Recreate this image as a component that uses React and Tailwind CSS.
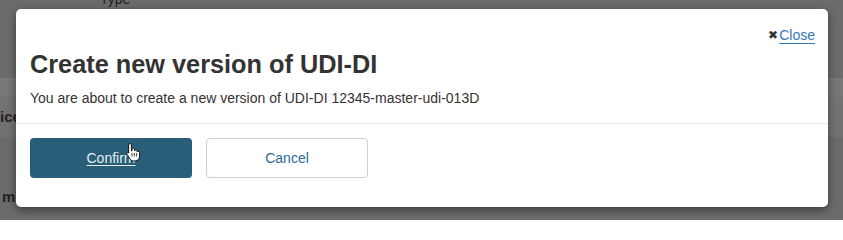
import React from "react";

const HandCursor = () => (
  <svg width="16" height="20" viewBox="0 0 16 20" className="absolute left-[95px] top-[4px]">
    <path
      d="M5 1.5c.8 0 1.4.6 1.4 1.4V9l.6-.1V7.6c0-.8.6-1.3 1.3-1.3s1.3.5 1.3 1.3v1.2c.2-.6.7-1 1.3-1 .7 0 1.3.6 1.3 1.3v.9c.2-.5.7-.8 1.2-.8.7 0 1.2.6 1.2 1.3v3.7c0 2.6-1.8 4.7-4.3 4.7H8.4c-1.5 0-2.6-.7-3.4-1.900L2 12.3c-.4-.6-.2-1.3.4-1.6.5-.3 1.1-.2 1.5.3L3.6 10V2.9c0-.8.6-1.4 1.4-1.4z"
      fill="#fff"
      stroke="#111"
      strokeWidth="1"
      strokeLinejoin="round"
    />
    <path d="M7 11v3.5M9.3 11v3.5M11.6 11v3.5" stroke="#111" strokeWidth="0.8" />
  </svg>
);

export default function App() {
  return (
    <div className="relative w-[843px] h-[220px] overflow-hidden bg-[#6b6b6b] font-['Liberation_Sans',Arial,sans-serif]">
      {/* dimmed page behind the dialog */}
      <div className="flex flex-col">
        <div className="h-[78px] pl-[100px]">
          <span className="block -mt-[11px] text-[14px] text-[#222]">Type</span>
        </div>
        <div className="h-[19px] bg-[#777777]" />
        <div className="h-[40px] bg-[#727272] flex items-center">
          <span className="text-[15px] font-bold text-[#222]">ice</span>
        </div>
        <div className="h-[83px] flex items-end pb-[12px]">
          <span className="pl-[2px] text-[15px] font-bold text-[#222]">m</span>
        </div>
      </div>

      {/* dialog */}
      <div className="absolute left-[16px] top-[9px] w-[812px] h-[198px] bg-white rounded-[5px] shadow-[0_3px_8px_rgba(0,0,0,0.45)] flex flex-col">
        <div className="flex justify-end pt-[12px] pr-[13px] h-[40px]">
          <a href="#" className="flex items-center text-[14px] leading-[16px]">
            <span className="text-[#333] text-[12px] mr-[1px]">✖</span>
            <span className="text-[#337ab7] underline decoration-[#337ab7] underline-offset-[3px]">Close</span>
          </a>
        </div>
        <div className="px-[14px]">
          <h2 className="text-[25.3px] leading-[28px] font-bold text-[#333] mt-[1px]">Create new version of UDI-DI</h2>
          <p className="text-[14px] leading-[20px] text-[#333] mt-[10px]">
            You are about to create a new version of UDI-DI 12345-master-udi-013D
          </p>
        </div>
        <div className="mt-[15px] border-t border-[#e8e8e8]" />
        <div className="flex gap-[14px] px-[14px] pt-[14px]">
          <button className="relative w-[162px] h-[40px] rounded-[4px] bg-[#285e77] text-[#e6eef2] text-[14px] underline underline-offset-[2px]">
            Confirm
            <HandCursor />
          </button>
          <button className="w-[162px] h-[40px] rounded-[4px] bg-white border border-[#cfcfcf] text-[#2a6a96] text-[14px]">
            Cancel
          </button>
        </div>
      </div>
    </div>
  );
}
